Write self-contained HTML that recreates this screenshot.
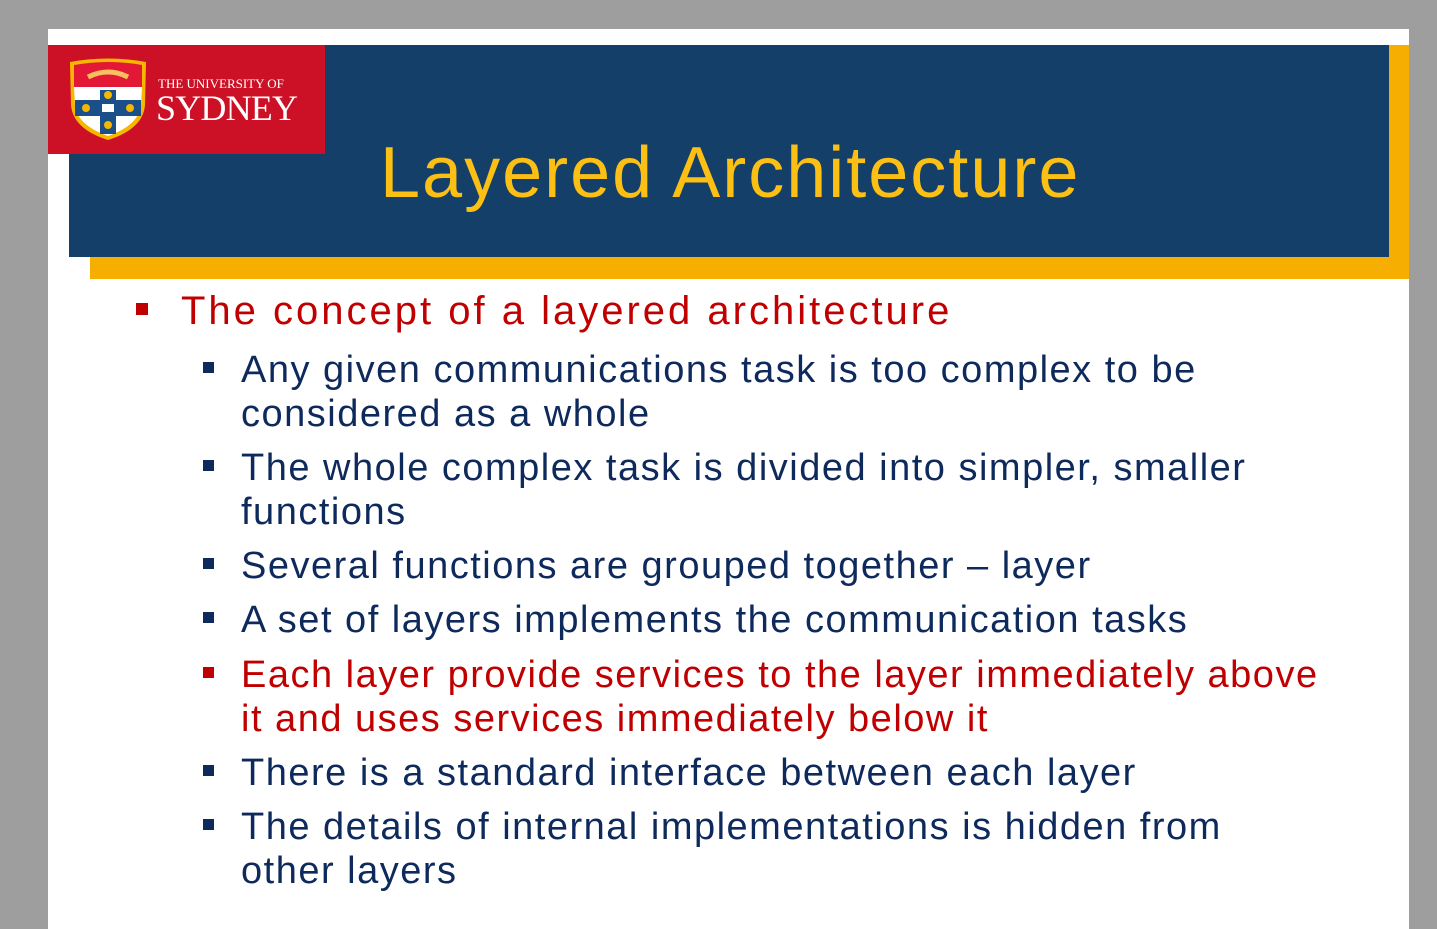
<!DOCTYPE html>
<html><head><style>
body{margin:0;width:1437px;height:919px;background:#9e9e9e;overflow:hidden;font-family:"Liberation Sans",sans-serif;}
.slide{position:absolute;left:48px;top:29px;width:1361px;height:900px;background:#fff;}
.yel{position:absolute;left:90px;top:45px;width:1319px;height:234px;background:#f6ae00;}
.navy{position:absolute;left:69px;top:45px;width:1320px;height:212px;background:#143f69;}
.logo{position:absolute;left:48px;top:45px;width:277px;height:109px;background:#cc1126;}
.title{position:absolute;left:380px;top:132px;font-size:72px;color:#fcbf14;white-space:nowrap;letter-spacing:2px;}
.l1,.l2{position:absolute;white-space:nowrap;line-height:44px;}
.l1{left:181px;font-size:40px;color:#c00000;letter-spacing:3px;}
.l2{left:241px;font-size:38px;color:#0e2a5c;letter-spacing:1.5px;}
.b{position:absolute;width:12px;height:12px;}
</style></head><body>
<div class="slide"></div>
<div class="yel"></div>
<div class="navy"></div>
<div class="logo">
<svg width="277" height="109" viewBox="0 0 277 109">
<path d="M22 17 Q60 10 98 17 L97 60 Q95 84 60 95 Q25 84 23 60 Z" fill="#f6b700"/>
<path d="M26 20 Q60 14 94 20 L94 42 L26 42 Z" fill="#e31837"/>
<path d="M26 42 L94 42 L93 60 Q91 80 60 91 Q29 80 27 60 Z" fill="#fff"/>
<rect x="27" y="55" width="66" height="16" fill="#1a4f8a"/>
<rect x="52" y="45" width="16" height="44" fill="#1a4f8a"/>
<circle cx="60" cy="50" r="4" fill="#f6b700"/><circle cx="60" cy="80" r="4" fill="#f6b700"/>
<circle cx="38" cy="63" r="4" fill="#f6b700"/><circle cx="82" cy="63" r="4" fill="#f6b700"/>
<rect x="54" y="59" width="12" height="8" fill="#fff"/>
<path d="M40 32 Q60 22 80 32" stroke="#f6c060" stroke-width="5" fill="none"/>
<text x="110" y="43" font-family="Liberation Serif" font-size="13" fill="#fff">THE UNIVERSITY OF</text>
<text x="108" y="75" font-family="Liberation Serif" font-size="36" fill="#fff" textLength="142">SYDNEY</text>
</svg></div>
<div class="title">Layered Architecture</div>

<div class="b" style="left:136px;top:303px;background:#c00000"></div>
<div class="l1" style="top:289px">The concept of a layered architecture</div>

<div class="b" style="left:203px;top:362px;background:#0e2a5c;width:11px;height:11px"></div>
<div class="l2" style="top:348px">Any given communications task is too complex to be<br>considered as a whole</div>
<div class="b" style="left:203px;top:460px;background:#0e2a5c;width:11px;height:11px"></div>
<div class="l2" style="top:446px">The whole complex task is divided into simpler, smaller<br>functions</div>
<div class="b" style="left:203px;top:558px;background:#0e2a5c;width:11px;height:11px"></div>
<div class="l2" style="top:544px">Several functions are grouped together – layer</div>
<div class="b" style="left:203px;top:612px;background:#0e2a5c;width:11px;height:11px"></div>
<div class="l2" style="top:598px">A set of layers implements the communication tasks</div>
<div class="b" style="left:203px;top:667px;background:#c00000;width:11px;height:11px"></div>
<div class="l2" style="top:653px;color:#c00000">Each layer provide services to the layer immediately above<br>it and uses services immediately below it</div>
<div class="b" style="left:203px;top:765px;background:#0e2a5c;width:11px;height:11px"></div>
<div class="l2" style="top:751px">There is a standard interface between each layer</div>
<div class="b" style="left:203px;top:819px;background:#0e2a5c;width:11px;height:11px"></div>
<div class="l2" style="top:805px">The details of internal implementations is hidden from<br>other layers</div>
</body></html>
